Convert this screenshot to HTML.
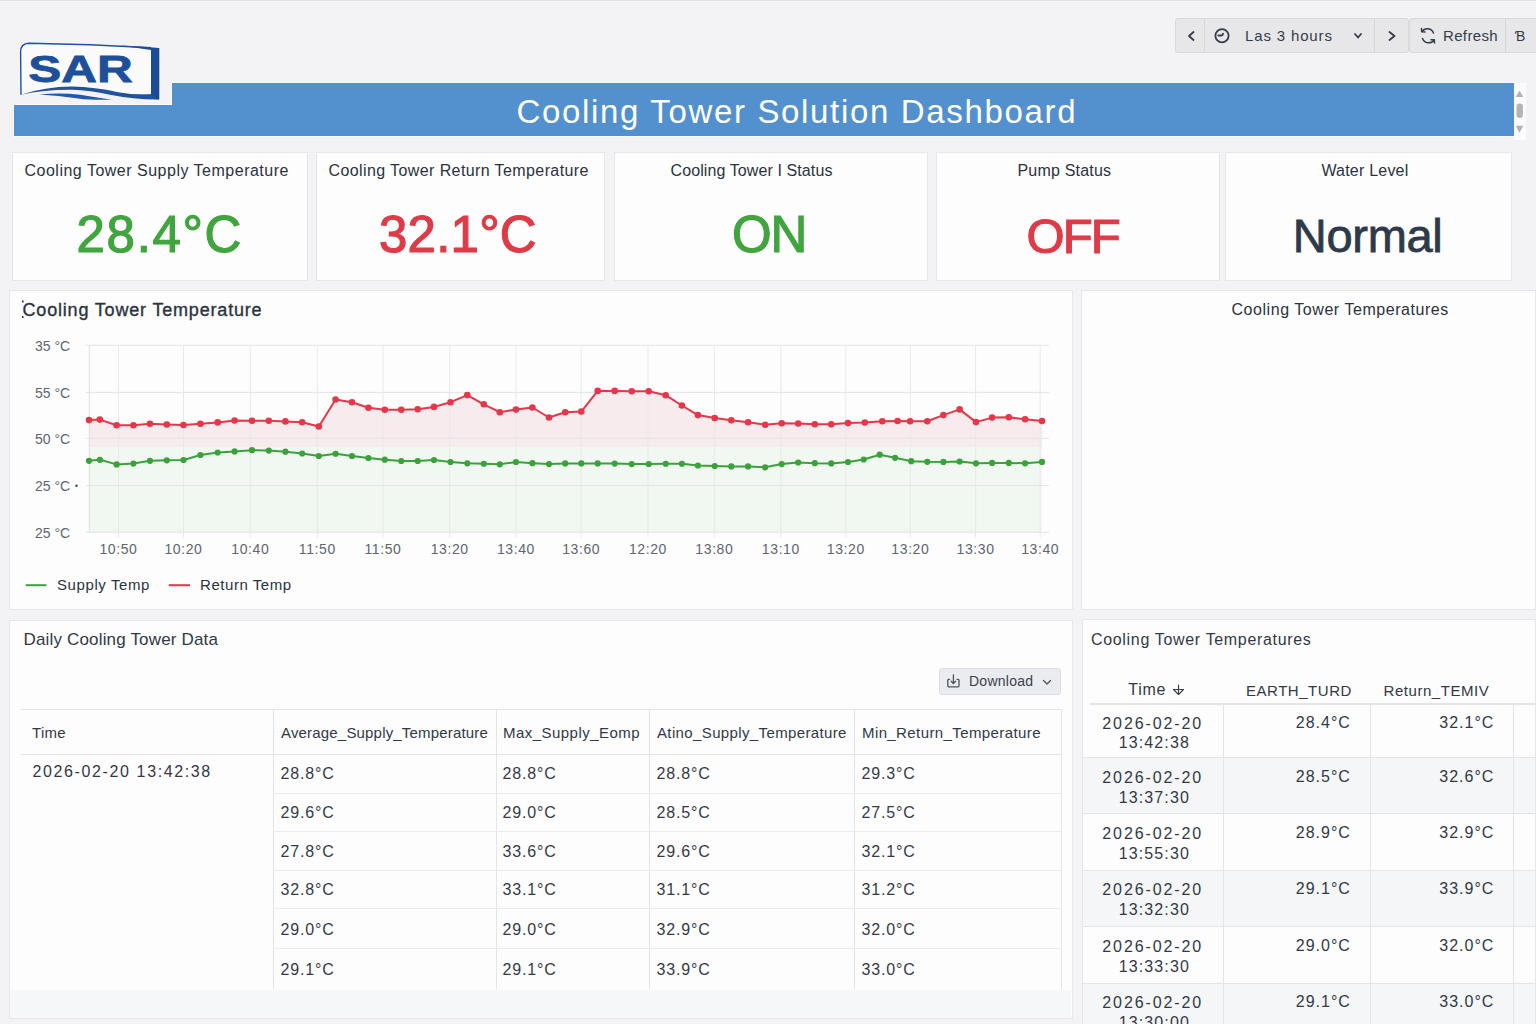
<!DOCTYPE html>
<html><head><meta charset="utf-8"><title>Cooling Tower Solution Dashboard</title>
<style>
html,body{margin:0;padding:0;}
body{width:1536px;height:1024px;overflow:hidden;position:relative;background:#f3f3f5;
font-family:"Liberation Sans",sans-serif;}
.t{position:absolute;line-height:1;white-space:nowrap;}
.b{position:absolute;box-sizing:border-box;}
.panel{position:absolute;box-sizing:border-box;background:#fdfdfd;border:1px solid #e6e7ea;}
svg{position:absolute;left:0;top:0;overflow:visible;}
</style></head><body>
<div class="b" style="left:0px;top:0px;width:1536px;height:1px;background:#e1e1e3;"></div>
<div class="b" style="left:0px;top:1px;width:1536px;height:1px;background:#f7f7f8;"></div>
<svg width="1536" height="150" style="left:0;top:0">
<polygon points="14,105 172,105 172,83 1514,83 1514,136 14,136" fill="#5291ce" stroke="#fafafa" stroke-width="2"/>
<polygon points="14,105 172,105 172,83 1514,83 1514,136 14,136" fill="#5291ce"/>
</svg>
<div class="t" style="left:516.5px;top:95.1px;font-size:33px;color:#ffffff;letter-spacing:1.66px;font-weight:400;">Cooling Tower Solution Dashboard</div>
<svg width="180" height="110" style="left:0;top:0">
<defs><linearGradient id="lg" x1="0" x2="1"><stop offset="0" stop-color="#1d4f9c"/><stop offset="1" stop-color="#1a4a94"/></linearGradient></defs>
<path d="M21,55 L20.6,52 Q20.5,43.5 29,43.2 Q90,44 159.3,48 L159.3,99.5 Q130,96 95,90 Q60,84 21,94.8 Z" fill="#fafafa"/>
<path d="M21,94.8 L20.6,52 Q20.5,43.5 29,43.2 Q90,44 151,47.8" fill="none" stroke="#1f52a0" stroke-width="1.4"/>
<path d="M120,45.6 Q140,46.5 159.3,48 L159.3,99.5 Q140,98 122,95 L151,94.5 L151,50 Z" fill="url(#lg)"/>
<path d="M21,94.8 Q45,86.8 72,86.6 Q95,87 118,92.3 Q135,95.3 151,94.3 L159.3,99.5 Q135,99.8 110,94.8 Q90,90.5 72,89.8 Q45,89.5 21,94.8 Z" fill="#1f52a0"/>
<path d="M39,94.6 Q60,92.3 80,94.8 Q95,97.3 112,99.7 Q92,100.3 78,98.4 Q58,95.8 39,94.6 Z" fill="#2459a8"/>
<text x="28.3" y="81.6" font-family="Liberation Sans" font-weight="700" font-size="37.5" fill="#1e4f9b" stroke="#1e4f9b" stroke-width="0.8" textLength="104.5" lengthAdjust="spacingAndGlyphs">SAR</text>
</svg>
<div class="b" style="left:1175px;top:18px;width:234px;height:35px;background:#e7e7ea;border:1px solid #d8d9dc;border-radius:3px;"></div>
<div class="b" style="left:1204px;top:19px;width:1px;height:33px;background:#d6d7da;"></div>
<div class="b" style="left:1374px;top:19px;width:1px;height:33px;background:#d6d7da;"></div>
<div class="b" style="left:1409px;top:18px;width:140px;height:35px;background:#e7e7ea;border:1px solid #d8d9dc;border-radius:3px;"></div>
<div class="b" style="left:1505px;top:19px;width:1px;height:33px;background:#d6d7da;"></div>
<svg width="1536" height="60" style="left:0;top:0">
<g fill="none" stroke="#353c48" stroke-width="1.8" stroke-linecap="round" stroke-linejoin="round">
<polyline points="1193.5,32 1189,36 1193.5,40"/>
<circle cx="1222" cy="35.7" r="6.6"/>
<path d="M1218.3,35.5 L1221.3,35.5 Q1223,35.4 1223,33.6"/>
<polyline points="1355,34 1358,37.5 1361,34"/>
<polyline points="1389.5,32 1394.5,36 1389.5,40"/>
<g stroke-width="1.5"><path d="M1433.5,33 A6.5,6.5 0 0 0 1422,31.5"/>
<polyline points="1421.5,28.5 1421.7,31.8 1425,32"/>
<path d="M1422.5,38.5 A6.5,6.5 0 0 0 1434,40"/>
<polyline points="1434.5,43 1434.3,39.8 1431,39.7"/></g>
</g>
</svg>
<div class="t" style="left:1245.0px;top:28.1px;font-size:15px;color:#353c48;letter-spacing:0.85px;font-weight:400;">Las 3 hours</div>
<div class="t" style="left:1443.0px;top:28.3px;font-size:15px;color:#353c48;letter-spacing:0.35px;font-weight:400;">Refresh</div>
<div class="t" style="left:1514.8px;top:29.1px;font-size:14px;color:#353c48;letter-spacing:0px;font-weight:400;">Ɓ</div>
<div class="b" style="left:1514px;top:83px;width:12px;height:57px;background:#fbfbfb;"></div>
<svg width="1536" height="150" style="left:0;top:0">
<polygon points="1519.5,90.5 1523.3,97 1515.8,97" fill="#b3b3b5"/>
<rect x="1516.5" y="103.5" width="6.4" height="14.5" rx="3.2" fill="#b3b3b5"/>
<polygon points="1515.8,125.8 1523.3,125.8 1519.5,132.7" fill="#b3b3b5"/>
</svg>
<div class="panel" style="left:12px;top:152px;width:296px;height:129px;"></div>
<div class="panel" style="left:316px;top:152px;width:289px;height:129px;"></div>
<div class="panel" style="left:614px;top:152px;width:314px;height:129px;"></div>
<div class="panel" style="left:936px;top:152px;width:284px;height:129px;"></div>
<div class="panel" style="left:1225px;top:152px;width:287px;height:129px;"></div>
<div class="t" style="left:24.5px;top:162.5px;font-size:16px;color:#2b3340;letter-spacing:0.5px;font-weight:400;">Cooling Tower Supply Temperature</div>
<div class="t" style="left:328.5px;top:162.5px;font-size:16px;color:#2b3340;letter-spacing:0.4px;font-weight:400;">Cooling Tower Return Temperature</div>
<div class="t" style="left:670.5px;top:162.5px;font-size:16px;color:#2b3340;letter-spacing:0.1px;font-weight:400;">Cooling Tower I Status</div>
<div class="t" style="left:1017.5px;top:162.5px;font-size:16px;color:#2b3340;letter-spacing:0.2px;font-weight:400;">Pump Status</div>
<div class="t" style="left:1321.4px;top:162.5px;font-size:16px;color:#2b3340;letter-spacing:0.21px;font-weight:400;">Water Level</div>
<div class="t" style="left:76.6px;top:209.3px;font-size:51px;color:#40a53e;letter-spacing:1.66px;font-weight:400;-webkit-text-stroke:1.2px currentColor;">28.4°C</div>
<div class="t" style="left:379.0px;top:209.2px;font-size:51px;color:#df3a47;letter-spacing:0.22px;font-weight:400;-webkit-text-stroke:1.2px currentColor;">32.1°C</div>
<div class="t" style="left:732.0px;top:209.2px;font-size:51px;color:#40a53e;letter-spacing:-1.2px;font-weight:400;-webkit-text-stroke:1.2px currentColor;">ON</div>
<div class="t" style="left:1026.5px;top:212.3px;font-size:49px;color:#df3a47;letter-spacing:-1.95px;font-weight:400;-webkit-text-stroke:1.2px currentColor;">OFF</div>
<div class="t" style="left:1292.8px;top:212.2px;font-size:47px;color:#2e3a4a;letter-spacing:-0.3px;font-weight:400;-webkit-text-stroke:0.8px currentColor;">Normal</div>
<div class="panel" style="left:9px;top:290px;width:1064px;height:320px;"></div>
<div class="panel" style="left:1081px;top:290px;width:455px;height:320px;"></div>
<div class="t" style="left:1231.5px;top:301.8px;font-size:16px;color:#2b3340;letter-spacing:0.55px;font-weight:400;">Cooling Tower Temperatures</div>
<div class="t" style="left:22.5px;top:301.1px;font-size:18px;color:#2b3340;letter-spacing:0.82px;font-weight:400;-webkit-text-stroke:0.35px #2b3340;">Cooling Tower Temperature</div>
<svg width="1536" height="1024" style="left:0;top:0">
<polygon points="89,447 89,420.1 99.9,419.6 116.6,425.3 133.4,425.3 150,423.7 166.8,424.5 183.5,425 200.4,423.7 217.7,422.4 234.6,420.5 252,420.8 268.8,420.8 285.4,421.4 302.2,422.3 318.8,426.5 335.6,399.5 352,402.2 368.4,407.8 384.8,409.7 401.25,409.8 417.7,409.2 434,406.9 450.5,402.2 467.3,395.1 483.8,404.3 499.8,412.2 516,409.6 532.4,407.5 549,417.5 565.2,412.2 581.3,411.6 597.7,390.9 614.7,390.9 631.7,391.3 648.7,391.3 665.7,395.2 681.9,405.5 697.9,415.1 714.7,418 731.3,420.2 748.1,422.2 765.1,424.7 781.7,423.3 798.2,423.5 814.8,424.3 831.25,424.3 848,423.1 864.8,422.5 882.3,421.3 897.6,421 910.1,421.3 927.3,421.3 943.4,415.1 959.6,409.4 976,422.1 992.1,417.6 1008.8,417.3 1025.1,419.2 1042,421 1042,447" fill="#f8ebee"/>
<rect x="89" y="447" width="953" height="85.3" fill="#f1f7f1"/>
<line x1="86" y1="345.3" x2="1049" y2="345.3" stroke="#e3e4e7" stroke-width="1"/>
<line x1="86" y1="392.4" x2="1049" y2="392.4" stroke="#e3e4e7" stroke-width="1"/>
<line x1="86" y1="438.3" x2="1049" y2="438.3" stroke="#e3e4e7" stroke-width="1"/>
<line x1="86" y1="485.6" x2="1049" y2="485.6" stroke="#e3e4e7" stroke-width="1"/>
<line x1="86" y1="532.3" x2="1049" y2="532.3" stroke="#e3e4e7" stroke-width="1"/>
<line x1="89.3" y1="345" x2="89.3" y2="532.3" stroke="#dedfe3" stroke-width="1"/>
<line x1="118.5" y1="345" x2="118.5" y2="537.5" stroke="#e8e9eb" stroke-width="1"/>
<line x1="183.5" y1="345" x2="183.5" y2="537.5" stroke="#e8e9eb" stroke-width="1"/>
<line x1="250.3" y1="345" x2="250.3" y2="537.5" stroke="#e8e9eb" stroke-width="1"/>
<line x1="317.3" y1="345" x2="317.3" y2="537.5" stroke="#e8e9eb" stroke-width="1"/>
<line x1="383" y1="345" x2="383" y2="537.5" stroke="#e8e9eb" stroke-width="1"/>
<line x1="449.7" y1="345" x2="449.7" y2="537.5" stroke="#e8e9eb" stroke-width="1"/>
<line x1="516" y1="345" x2="516" y2="537.5" stroke="#e8e9eb" stroke-width="1"/>
<line x1="581.2" y1="345" x2="581.2" y2="537.5" stroke="#e8e9eb" stroke-width="1"/>
<line x1="648" y1="345" x2="648" y2="537.5" stroke="#e8e9eb" stroke-width="1"/>
<line x1="714.4" y1="345" x2="714.4" y2="537.5" stroke="#e8e9eb" stroke-width="1"/>
<line x1="780.9" y1="345" x2="780.9" y2="537.5" stroke="#e8e9eb" stroke-width="1"/>
<line x1="845.8" y1="345" x2="845.8" y2="537.5" stroke="#e8e9eb" stroke-width="1"/>
<line x1="910.4" y1="345" x2="910.4" y2="537.5" stroke="#e8e9eb" stroke-width="1"/>
<line x1="975.6" y1="345" x2="975.6" y2="537.5" stroke="#e8e9eb" stroke-width="1"/>
<line x1="1040.2" y1="345" x2="1040.2" y2="537.5" stroke="#e8e9eb" stroke-width="1"/>
<polyline points="89,420.1 99.9,419.6 116.6,425.3 133.4,425.3 150,423.7 166.8,424.5 183.5,425 200.4,423.7 217.7,422.4 234.6,420.5 252,420.8 268.8,420.8 285.4,421.4 302.2,422.3 318.8,426.5 335.6,399.5 352,402.2 368.4,407.8 384.8,409.7 401.25,409.8 417.7,409.2 434,406.9 450.5,402.2 467.3,395.1 483.8,404.3 499.8,412.2 516,409.6 532.4,407.5 549,417.5 565.2,412.2 581.3,411.6 597.7,390.9 614.7,390.9 631.7,391.3 648.7,391.3 665.7,395.2 681.9,405.5 697.9,415.1 714.7,418 731.3,420.2 748.1,422.2 765.1,424.7 781.7,423.3 798.2,423.5 814.8,424.3 831.25,424.3 848,423.1 864.8,422.5 882.3,421.3 897.6,421 910.1,421.3 927.3,421.3 943.4,415.1 959.6,409.4 976,422.1 992.1,417.6 1008.8,417.3 1025.1,419.2 1042,421" fill="none" stroke="#e5364a" stroke-width="2" stroke-linejoin="round"/>
<polyline points="89,460.8 99.9,459.8 116.6,464.4 133.4,463.6 150,460.8 166.8,460.3 183.5,460 200.4,455 217.7,452.5 234.6,451.4 252,450.2 268.8,450.6 285.4,451.7 302.2,453.5 318.8,456 335.6,453.75 352,456 368.4,458 384.8,459.7 401.25,461 417.7,461 434,460 450.5,462 467.3,463.3 483.8,463.75 499.8,464.3 516,462 532.4,463.2 549,464.1 565.2,463.4 581.3,463.4 597.7,463.4 614.7,463.6 631.7,464.1 648.7,464 665.7,463.75 681.9,463.75 697.9,465.5 714.7,466.1 731.3,466.4 748.1,466.4 765.1,467.3 781.7,464.1 798.2,462.5 814.8,463.2 831.25,463.4 848,462 863.7,459.5 879.7,454.7 895.1,457.8 911.2,461.2 927.3,461.8 943.4,461.9 959.6,461.5 976,463.3 992.1,462.9 1008.8,462.9 1025.1,463.3 1042,461.9" fill="none" stroke="#3ba23b" stroke-width="2" stroke-linejoin="round"/>
<circle cx="89" cy="420.1" r="3.3" fill="#e5364a"/><circle cx="99.9" cy="419.6" r="3.3" fill="#e5364a"/><circle cx="116.6" cy="425.3" r="3.3" fill="#e5364a"/><circle cx="133.4" cy="425.3" r="3.3" fill="#e5364a"/><circle cx="150" cy="423.7" r="3.3" fill="#e5364a"/><circle cx="166.8" cy="424.5" r="3.3" fill="#e5364a"/><circle cx="183.5" cy="425" r="3.3" fill="#e5364a"/><circle cx="200.4" cy="423.7" r="3.3" fill="#e5364a"/><circle cx="217.7" cy="422.4" r="3.3" fill="#e5364a"/><circle cx="234.6" cy="420.5" r="3.3" fill="#e5364a"/><circle cx="252" cy="420.8" r="3.3" fill="#e5364a"/><circle cx="268.8" cy="420.8" r="3.3" fill="#e5364a"/><circle cx="285.4" cy="421.4" r="3.3" fill="#e5364a"/><circle cx="302.2" cy="422.3" r="3.3" fill="#e5364a"/><circle cx="318.8" cy="426.5" r="3.3" fill="#e5364a"/><circle cx="335.6" cy="399.5" r="3.3" fill="#e5364a"/><circle cx="352" cy="402.2" r="3.3" fill="#e5364a"/><circle cx="368.4" cy="407.8" r="3.3" fill="#e5364a"/><circle cx="384.8" cy="409.7" r="3.3" fill="#e5364a"/><circle cx="401.25" cy="409.8" r="3.3" fill="#e5364a"/><circle cx="417.7" cy="409.2" r="3.3" fill="#e5364a"/><circle cx="434" cy="406.9" r="3.3" fill="#e5364a"/><circle cx="450.5" cy="402.2" r="3.3" fill="#e5364a"/><circle cx="467.3" cy="395.1" r="3.3" fill="#e5364a"/><circle cx="483.8" cy="404.3" r="3.3" fill="#e5364a"/><circle cx="499.8" cy="412.2" r="3.3" fill="#e5364a"/><circle cx="516" cy="409.6" r="3.3" fill="#e5364a"/><circle cx="532.4" cy="407.5" r="3.3" fill="#e5364a"/><circle cx="549" cy="417.5" r="3.3" fill="#e5364a"/><circle cx="565.2" cy="412.2" r="3.3" fill="#e5364a"/><circle cx="581.3" cy="411.6" r="3.3" fill="#e5364a"/><circle cx="597.7" cy="390.9" r="3.3" fill="#e5364a"/><circle cx="614.7" cy="390.9" r="3.3" fill="#e5364a"/><circle cx="631.7" cy="391.3" r="3.3" fill="#e5364a"/><circle cx="648.7" cy="391.3" r="3.3" fill="#e5364a"/><circle cx="665.7" cy="395.2" r="3.3" fill="#e5364a"/><circle cx="681.9" cy="405.5" r="3.3" fill="#e5364a"/><circle cx="697.9" cy="415.1" r="3.3" fill="#e5364a"/><circle cx="714.7" cy="418" r="3.3" fill="#e5364a"/><circle cx="731.3" cy="420.2" r="3.3" fill="#e5364a"/><circle cx="748.1" cy="422.2" r="3.3" fill="#e5364a"/><circle cx="765.1" cy="424.7" r="3.3" fill="#e5364a"/><circle cx="781.7" cy="423.3" r="3.3" fill="#e5364a"/><circle cx="798.2" cy="423.5" r="3.3" fill="#e5364a"/><circle cx="814.8" cy="424.3" r="3.3" fill="#e5364a"/><circle cx="831.25" cy="424.3" r="3.3" fill="#e5364a"/><circle cx="848" cy="423.1" r="3.3" fill="#e5364a"/><circle cx="864.8" cy="422.5" r="3.3" fill="#e5364a"/><circle cx="882.3" cy="421.3" r="3.3" fill="#e5364a"/><circle cx="897.6" cy="421" r="3.3" fill="#e5364a"/><circle cx="910.1" cy="421.3" r="3.3" fill="#e5364a"/><circle cx="927.3" cy="421.3" r="3.3" fill="#e5364a"/><circle cx="943.4" cy="415.1" r="3.3" fill="#e5364a"/><circle cx="959.6" cy="409.4" r="3.3" fill="#e5364a"/><circle cx="976" cy="422.1" r="3.3" fill="#e5364a"/><circle cx="992.1" cy="417.6" r="3.3" fill="#e5364a"/><circle cx="1008.8" cy="417.3" r="3.3" fill="#e5364a"/><circle cx="1025.1" cy="419.2" r="3.3" fill="#e5364a"/><circle cx="1042" cy="421" r="3.3" fill="#e5364a"/>
<circle cx="89" cy="460.8" r="3.1" fill="#3ba23b"/><circle cx="99.9" cy="459.8" r="3.1" fill="#3ba23b"/><circle cx="116.6" cy="464.4" r="3.1" fill="#3ba23b"/><circle cx="133.4" cy="463.6" r="3.1" fill="#3ba23b"/><circle cx="150" cy="460.8" r="3.1" fill="#3ba23b"/><circle cx="166.8" cy="460.3" r="3.1" fill="#3ba23b"/><circle cx="183.5" cy="460" r="3.1" fill="#3ba23b"/><circle cx="200.4" cy="455" r="3.1" fill="#3ba23b"/><circle cx="217.7" cy="452.5" r="3.1" fill="#3ba23b"/><circle cx="234.6" cy="451.4" r="3.1" fill="#3ba23b"/><circle cx="252" cy="450.2" r="3.1" fill="#3ba23b"/><circle cx="268.8" cy="450.6" r="3.1" fill="#3ba23b"/><circle cx="285.4" cy="451.7" r="3.1" fill="#3ba23b"/><circle cx="302.2" cy="453.5" r="3.1" fill="#3ba23b"/><circle cx="318.8" cy="456" r="3.1" fill="#3ba23b"/><circle cx="335.6" cy="453.75" r="3.1" fill="#3ba23b"/><circle cx="352" cy="456" r="3.1" fill="#3ba23b"/><circle cx="368.4" cy="458" r="3.1" fill="#3ba23b"/><circle cx="384.8" cy="459.7" r="3.1" fill="#3ba23b"/><circle cx="401.25" cy="461" r="3.1" fill="#3ba23b"/><circle cx="417.7" cy="461" r="3.1" fill="#3ba23b"/><circle cx="434" cy="460" r="3.1" fill="#3ba23b"/><circle cx="450.5" cy="462" r="3.1" fill="#3ba23b"/><circle cx="467.3" cy="463.3" r="3.1" fill="#3ba23b"/><circle cx="483.8" cy="463.75" r="3.1" fill="#3ba23b"/><circle cx="499.8" cy="464.3" r="3.1" fill="#3ba23b"/><circle cx="516" cy="462" r="3.1" fill="#3ba23b"/><circle cx="532.4" cy="463.2" r="3.1" fill="#3ba23b"/><circle cx="549" cy="464.1" r="3.1" fill="#3ba23b"/><circle cx="565.2" cy="463.4" r="3.1" fill="#3ba23b"/><circle cx="581.3" cy="463.4" r="3.1" fill="#3ba23b"/><circle cx="597.7" cy="463.4" r="3.1" fill="#3ba23b"/><circle cx="614.7" cy="463.6" r="3.1" fill="#3ba23b"/><circle cx="631.7" cy="464.1" r="3.1" fill="#3ba23b"/><circle cx="648.7" cy="464" r="3.1" fill="#3ba23b"/><circle cx="665.7" cy="463.75" r="3.1" fill="#3ba23b"/><circle cx="681.9" cy="463.75" r="3.1" fill="#3ba23b"/><circle cx="697.9" cy="465.5" r="3.1" fill="#3ba23b"/><circle cx="714.7" cy="466.1" r="3.1" fill="#3ba23b"/><circle cx="731.3" cy="466.4" r="3.1" fill="#3ba23b"/><circle cx="748.1" cy="466.4" r="3.1" fill="#3ba23b"/><circle cx="765.1" cy="467.3" r="3.1" fill="#3ba23b"/><circle cx="781.7" cy="464.1" r="3.1" fill="#3ba23b"/><circle cx="798.2" cy="462.5" r="3.1" fill="#3ba23b"/><circle cx="814.8" cy="463.2" r="3.1" fill="#3ba23b"/><circle cx="831.25" cy="463.4" r="3.1" fill="#3ba23b"/><circle cx="848" cy="462" r="3.1" fill="#3ba23b"/><circle cx="863.7" cy="459.5" r="3.1" fill="#3ba23b"/><circle cx="879.7" cy="454.7" r="3.1" fill="#3ba23b"/><circle cx="895.1" cy="457.8" r="3.1" fill="#3ba23b"/><circle cx="911.2" cy="461.2" r="3.1" fill="#3ba23b"/><circle cx="927.3" cy="461.8" r="3.1" fill="#3ba23b"/><circle cx="943.4" cy="461.9" r="3.1" fill="#3ba23b"/><circle cx="959.6" cy="461.5" r="3.1" fill="#3ba23b"/><circle cx="976" cy="463.3" r="3.1" fill="#3ba23b"/><circle cx="992.1" cy="462.9" r="3.1" fill="#3ba23b"/><circle cx="1008.8" cy="462.9" r="3.1" fill="#3ba23b"/><circle cx="1025.1" cy="463.3" r="3.1" fill="#3ba23b"/><circle cx="1042" cy="461.9" r="3.1" fill="#3ba23b"/>
<line x1="25.7" y1="585.2" x2="46.4" y2="585.2" stroke="#3ba23b" stroke-width="2"/>
<line x1="168.8" y1="585.2" x2="190" y2="585.2" stroke="#e5364a" stroke-width="2"/>
<circle cx="76.5" cy="485.7" r="1.2" fill="#444"/>
<rect x="22" y="300.5" width="1.6" height="2" fill="#333"/><rect x="22" y="316" width="1.5" height="2" fill="#333"/>
</svg>
<div class="t" style="left:35.0px;top:339.4px;font-size:14px;color:#60666f;letter-spacing:0px;font-weight:400;">35 °C</div>
<div class="t" style="left:35.0px;top:385.9px;font-size:14px;color:#60666f;letter-spacing:0px;font-weight:400;">55 °C</div>
<div class="t" style="left:35.0px;top:432.4px;font-size:14px;color:#60666f;letter-spacing:0px;font-weight:400;">50 °C</div>
<div class="t" style="left:35.0px;top:479.1px;font-size:14px;color:#60666f;letter-spacing:0px;font-weight:400;">25 °C</div>
<div class="t" style="left:35.0px;top:525.7px;font-size:14px;color:#60666f;letter-spacing:0px;font-weight:400;">25 °C</div>
<div class="t" style="left:88.5px;width:60px;text-align:center;top:542.4px;font-size:14px;color:#60666f;letter-spacing:0.6px">10:50</div>
<div class="t" style="left:153.5px;width:60px;text-align:center;top:542.4px;font-size:14px;color:#60666f;letter-spacing:0.6px">10:20</div>
<div class="t" style="left:220.3px;width:60px;text-align:center;top:542.4px;font-size:14px;color:#60666f;letter-spacing:0.6px">10:40</div>
<div class="t" style="left:287.3px;width:60px;text-align:center;top:542.4px;font-size:14px;color:#60666f;letter-spacing:0.6px">11:50</div>
<div class="t" style="left:353px;width:60px;text-align:center;top:542.4px;font-size:14px;color:#60666f;letter-spacing:0.6px">11:50</div>
<div class="t" style="left:419.7px;width:60px;text-align:center;top:542.4px;font-size:14px;color:#60666f;letter-spacing:0.6px">13:20</div>
<div class="t" style="left:486px;width:60px;text-align:center;top:542.4px;font-size:14px;color:#60666f;letter-spacing:0.6px">13:40</div>
<div class="t" style="left:551.2px;width:60px;text-align:center;top:542.4px;font-size:14px;color:#60666f;letter-spacing:0.6px">13:60</div>
<div class="t" style="left:618px;width:60px;text-align:center;top:542.4px;font-size:14px;color:#60666f;letter-spacing:0.6px">12:20</div>
<div class="t" style="left:684.4px;width:60px;text-align:center;top:542.4px;font-size:14px;color:#60666f;letter-spacing:0.6px">13:80</div>
<div class="t" style="left:750.9px;width:60px;text-align:center;top:542.4px;font-size:14px;color:#60666f;letter-spacing:0.6px">13:10</div>
<div class="t" style="left:815.8px;width:60px;text-align:center;top:542.4px;font-size:14px;color:#60666f;letter-spacing:0.6px">13:20</div>
<div class="t" style="left:880.4px;width:60px;text-align:center;top:542.4px;font-size:14px;color:#60666f;letter-spacing:0.6px">13:20</div>
<div class="t" style="left:945.6px;width:60px;text-align:center;top:542.4px;font-size:14px;color:#60666f;letter-spacing:0.6px">13:30</div>
<div class="t" style="left:1010.2px;width:60px;text-align:center;top:542.4px;font-size:14px;color:#60666f;letter-spacing:0.6px">13:40</div>
<div class="t" style="left:57.0px;top:576.8px;font-size:15px;color:#2b3340;letter-spacing:0.6px;font-weight:400;">Supply Temp</div>
<div class="t" style="left:200.0px;top:576.8px;font-size:15px;color:#2b3340;letter-spacing:0.55px;font-weight:400;">Return Temp</div>
<div class="panel" style="left:9px;top:620px;width:1064px;height:399px;"></div>
<div class="b" style="left:10px;top:989.5px;width:1061px;height:28.0px;background:#f6f7f9;"></div>
<div class="t" style="left:23.5px;top:631.3px;font-size:17px;color:#323946;letter-spacing:0.17px;font-weight:400;">Daily Cooling Tower Data</div>
<div class="b" style="left:938.5px;top:668px;width:122.5px;height:26.5px;background:#ebecef;border:1px solid #dcdde1;border-radius:3px;"></div>
<svg width="1536" height="1024" style="left:0;top:0">
<g fill="none" stroke="#4d535d" stroke-width="1.3" stroke-linecap="round" stroke-linejoin="round">
<path d="M949.5,679.3 L948.5,679.3 Q947.8,679.3 947.8,680.2 L947.8,685.8 Q947.8,686.8 948.8,686.8 L958,686.8 Q959,686.8 959,685.8 L959,680.2 Q959,679.3 958.2,679.3 L957,679.3"/>
<line x1="953.4" y1="674.8" x2="953.4" y2="683.5"/>
<polyline points="951.2,681.3 953.4,683.5 955.6,681.3"/>
<polyline points="1043.5,680.5 1047,684 1050.5,680.5"/>
</g></svg>
<div class="t" style="left:969.0px;top:674.3px;font-size:14px;color:#3a404b;letter-spacing:0.25px;font-weight:400;">Download</div>
<div class="b" style="left:20px;top:709px;width:1041px;height:1px;background:#e4e5e8;"></div>
<div class="b" style="left:20px;top:754px;width:1041px;height:1px;background:#e4e5e8;"></div>
<div class="b" style="left:273px;top:709px;width:1px;height:280px;background:#e4e5e8;"></div>
<div class="b" style="left:495.5px;top:709px;width:1.0px;height:280px;background:#e4e5e8;"></div>
<div class="b" style="left:649px;top:709px;width:1px;height:280px;background:#e4e5e8;"></div>
<div class="b" style="left:854px;top:709px;width:1px;height:280px;background:#e4e5e8;"></div>
<div class="b" style="left:1060.5px;top:709px;width:1.0px;height:280px;background:#e4e5e8;"></div>
<div class="b" style="left:273px;top:793px;width:788px;height:1px;background:#eaebed;"></div>
<div class="b" style="left:273px;top:831px;width:788px;height:1px;background:#eaebed;"></div>
<div class="b" style="left:273px;top:870px;width:788px;height:1px;background:#eaebed;"></div>
<div class="b" style="left:273px;top:908px;width:788px;height:1px;background:#eaebed;"></div>
<div class="b" style="left:273px;top:948px;width:788px;height:1px;background:#eaebed;"></div>
<div class="t" style="left:32.0px;top:725.2px;font-size:15px;color:#323946;letter-spacing:0.3px;font-weight:400;">Time</div>
<div class="t" style="left:281.0px;top:725.2px;font-size:15px;color:#323946;letter-spacing:0.18px;font-weight:400;">Average_Supply_Temperature</div>
<div class="t" style="left:503.0px;top:725.2px;font-size:15px;color:#323946;letter-spacing:0.46px;font-weight:400;">Max_Supply_Eomp</div>
<div class="t" style="left:657.0px;top:725.2px;font-size:15px;color:#323946;letter-spacing:0.37px;font-weight:400;">Atino_Supply_Temperature</div>
<div class="t" style="left:862.0px;top:725.2px;font-size:15px;color:#323946;letter-spacing:0.4px;font-weight:400;">Min_Return_Temperature</div>
<div class="t" style="left:32.5px;top:763.5px;font-size:16px;color:#323946;letter-spacing:1.62px;font-weight:400;">2026-02-20 13:42:38</div>
<div class="t" style="left:280.6px;top:765.9px;font-size:16px;color:#353b46;letter-spacing:0.82px;font-weight:400;">28.8°C</div>
<div class="t" style="left:502.6px;top:765.9px;font-size:16px;color:#353b46;letter-spacing:0.82px;font-weight:400;">28.8°C</div>
<div class="t" style="left:656.6px;top:765.9px;font-size:16px;color:#353b46;letter-spacing:0.82px;font-weight:400;">28.8°C</div>
<div class="t" style="left:861.6px;top:765.9px;font-size:16px;color:#353b46;letter-spacing:0.82px;font-weight:400;">29.3°C</div>
<div class="t" style="left:280.6px;top:804.6px;font-size:16px;color:#353b46;letter-spacing:0.82px;font-weight:400;">29.6°C</div>
<div class="t" style="left:502.6px;top:804.6px;font-size:16px;color:#353b46;letter-spacing:0.82px;font-weight:400;">29.0°C</div>
<div class="t" style="left:656.6px;top:804.6px;font-size:16px;color:#353b46;letter-spacing:0.82px;font-weight:400;">28.5°C</div>
<div class="t" style="left:861.6px;top:804.6px;font-size:16px;color:#353b46;letter-spacing:0.82px;font-weight:400;">27.5°C</div>
<div class="t" style="left:280.6px;top:843.8px;font-size:16px;color:#353b46;letter-spacing:0.82px;font-weight:400;">27.8°C</div>
<div class="t" style="left:502.6px;top:843.8px;font-size:16px;color:#353b46;letter-spacing:0.82px;font-weight:400;">33.6°C</div>
<div class="t" style="left:656.6px;top:843.8px;font-size:16px;color:#353b46;letter-spacing:0.82px;font-weight:400;">29.6°C</div>
<div class="t" style="left:861.6px;top:843.8px;font-size:16px;color:#353b46;letter-spacing:0.82px;font-weight:400;">32.1°C</div>
<div class="t" style="left:280.6px;top:882.4px;font-size:16px;color:#353b46;letter-spacing:0.82px;font-weight:400;">32.8°C</div>
<div class="t" style="left:502.6px;top:882.4px;font-size:16px;color:#353b46;letter-spacing:0.82px;font-weight:400;">33.1°C</div>
<div class="t" style="left:656.6px;top:882.4px;font-size:16px;color:#353b46;letter-spacing:0.82px;font-weight:400;">31.1°C</div>
<div class="t" style="left:861.6px;top:882.4px;font-size:16px;color:#353b46;letter-spacing:0.82px;font-weight:400;">31.2°C</div>
<div class="t" style="left:280.6px;top:922.2px;font-size:16px;color:#353b46;letter-spacing:0.82px;font-weight:400;">29.0°C</div>
<div class="t" style="left:502.6px;top:922.2px;font-size:16px;color:#353b46;letter-spacing:0.82px;font-weight:400;">29.0°C</div>
<div class="t" style="left:656.6px;top:922.2px;font-size:16px;color:#353b46;letter-spacing:0.82px;font-weight:400;">32.9°C</div>
<div class="t" style="left:861.6px;top:922.2px;font-size:16px;color:#353b46;letter-spacing:0.82px;font-weight:400;">32.0°C</div>
<div class="t" style="left:280.6px;top:961.7px;font-size:16px;color:#353b46;letter-spacing:0.82px;font-weight:400;">29.1°C</div>
<div class="t" style="left:502.6px;top:961.7px;font-size:16px;color:#353b46;letter-spacing:0.82px;font-weight:400;">29.1°C</div>
<div class="t" style="left:656.6px;top:961.7px;font-size:16px;color:#353b46;letter-spacing:0.82px;font-weight:400;">33.9°C</div>
<div class="t" style="left:861.6px;top:961.7px;font-size:16px;color:#353b46;letter-spacing:0.82px;font-weight:400;">33.0°C</div>
<div class="panel" style="left:1082px;top:619px;width:454px;height:420px;"></div>
<div class="t" style="left:1091.0px;top:631.5px;font-size:16px;color:#323946;letter-spacing:0.67px;font-weight:400;">Cooling Tower Temperatures</div>
<div class="t" style="left:1128.3px;top:682.4px;font-size:16px;color:#323946;letter-spacing:0.73px;font-weight:400;">Time</div>
<svg width="1536" height="1024" style="left:0;top:0">
<g fill="none" stroke="#3a404b" stroke-width="1.15" stroke-linecap="round" stroke-linejoin="round">
<line x1="1178.5" y1="685" x2="1178.5" y2="694.5"/>
<polyline points="1173.5,689.5 1178.5,694.5 1183.5,689.5"/>
<line x1="1174" y1="689.5" x2="1183" y2="689.5"/>
</g></svg>
<div class="t" style="left:1246.0px;top:683.3px;font-size:15px;color:#323946;letter-spacing:0.53px;font-weight:400;">EARTH_TURD</div>
<div class="t" style="left:1383.5px;top:683.3px;font-size:15px;color:#323946;letter-spacing:0.55px;font-weight:400;">Return_TEMIV</div>
<div class="b" style="left:1083px;top:758px;width:452px;height:55px;background:#f5f6f8;"></div>
<div class="b" style="left:1083px;top:871px;width:452px;height:55px;background:#f5f6f8;"></div>
<div class="b" style="left:1083px;top:984px;width:452px;height:56px;background:#f5f6f8;"></div>
<div class="b" style="left:1090px;top:703px;width:445px;height:2px;background:#e3e4e7;"></div>
<div class="b" style="left:1083px;top:757px;width:452px;height:1px;background:#e4e5e8;"></div>
<div class="b" style="left:1083px;top:813px;width:452px;height:1px;background:#e4e5e8;"></div>
<div class="b" style="left:1083px;top:870px;width:452px;height:1px;background:#e4e5e8;"></div>
<div class="b" style="left:1083px;top:926px;width:452px;height:1px;background:#e4e5e8;"></div>
<div class="b" style="left:1083px;top:983px;width:452px;height:1px;background:#e4e5e8;"></div>
<div class="b" style="left:1222.5px;top:705px;width:1.0px;height:319px;background:#e4e5e8;"></div>
<div class="b" style="left:1370px;top:705px;width:1px;height:319px;background:#e4e5e8;"></div>
<div class="b" style="left:1513px;top:705px;width:1px;height:319px;background:#e4e5e8;"></div>
<div class="t" style="left:1102.3px;top:715.5px;font-size:16px;color:#323946;letter-spacing:1.9px;font-weight:400;">2026-02-20</div>
<div class="t" style="left:1118.8px;top:735.0px;font-size:16px;color:#323946;letter-spacing:1.1px;font-weight:400;">13:42:38</div>
<div class="t" style="left:1250.9px;width:100px;text-align:right;top:714.5px;font-size:16px;color:#323946;letter-spacing:1.0px">28.4°C</div>
<div class="t" style="left:1394.4px;width:100px;text-align:right;top:714.5px;font-size:16px;color:#323946;letter-spacing:1.0px">32.1°C</div>
<div class="t" style="left:1102.3px;top:769.9px;font-size:16px;color:#323946;letter-spacing:1.9px;font-weight:400;">2026-02-20</div>
<div class="t" style="left:1118.8px;top:790.2px;font-size:16px;color:#323946;letter-spacing:1.1px;font-weight:400;">13:37:30</div>
<div class="t" style="left:1250.9px;width:100px;text-align:right;top:768.9px;font-size:16px;color:#323946;letter-spacing:1.0px">28.5°C</div>
<div class="t" style="left:1394.4px;width:100px;text-align:right;top:768.9px;font-size:16px;color:#323946;letter-spacing:1.0px">32.6°C</div>
<div class="t" style="left:1102.3px;top:826.0px;font-size:16px;color:#323946;letter-spacing:1.9px;font-weight:400;">2026-02-20</div>
<div class="t" style="left:1118.8px;top:846.2px;font-size:16px;color:#323946;letter-spacing:1.1px;font-weight:400;">13:55:30</div>
<div class="t" style="left:1250.9px;width:100px;text-align:right;top:825.0px;font-size:16px;color:#323946;letter-spacing:1.0px">28.9°C</div>
<div class="t" style="left:1394.4px;width:100px;text-align:right;top:825.0px;font-size:16px;color:#323946;letter-spacing:1.0px">32.9°C</div>
<div class="t" style="left:1102.3px;top:882.2px;font-size:16px;color:#323946;letter-spacing:1.9px;font-weight:400;">2026-02-20</div>
<div class="t" style="left:1118.8px;top:902.2px;font-size:16px;color:#323946;letter-spacing:1.1px;font-weight:400;">13:32:30</div>
<div class="t" style="left:1250.9px;width:100px;text-align:right;top:881.2px;font-size:16px;color:#323946;letter-spacing:1.0px">29.1°C</div>
<div class="t" style="left:1394.4px;width:100px;text-align:right;top:881.2px;font-size:16px;color:#323946;letter-spacing:1.0px">33.9°C</div>
<div class="t" style="left:1102.3px;top:938.5px;font-size:16px;color:#323946;letter-spacing:1.9px;font-weight:400;">2026-02-20</div>
<div class="t" style="left:1118.8px;top:958.5px;font-size:16px;color:#323946;letter-spacing:1.1px;font-weight:400;">13:33:30</div>
<div class="t" style="left:1250.9px;width:100px;text-align:right;top:937.5px;font-size:16px;color:#323946;letter-spacing:1.0px">29.0°C</div>
<div class="t" style="left:1394.4px;width:100px;text-align:right;top:937.5px;font-size:16px;color:#323946;letter-spacing:1.0px">32.0°C</div>
<div class="t" style="left:1102.3px;top:994.5px;font-size:16px;color:#323946;letter-spacing:1.9px;font-weight:400;">2026-02-20</div>
<div class="t" style="left:1118.8px;top:1014.5px;font-size:16px;color:#323946;letter-spacing:1.1px;font-weight:400;">13:30:00</div>
<div class="t" style="left:1250.9px;width:100px;text-align:right;top:993.5px;font-size:16px;color:#323946;letter-spacing:1.0px">29.1°C</div>
<div class="t" style="left:1394.4px;width:100px;text-align:right;top:993.5px;font-size:16px;color:#323946;letter-spacing:1.0px">33.0°C</div>
</body></html>
